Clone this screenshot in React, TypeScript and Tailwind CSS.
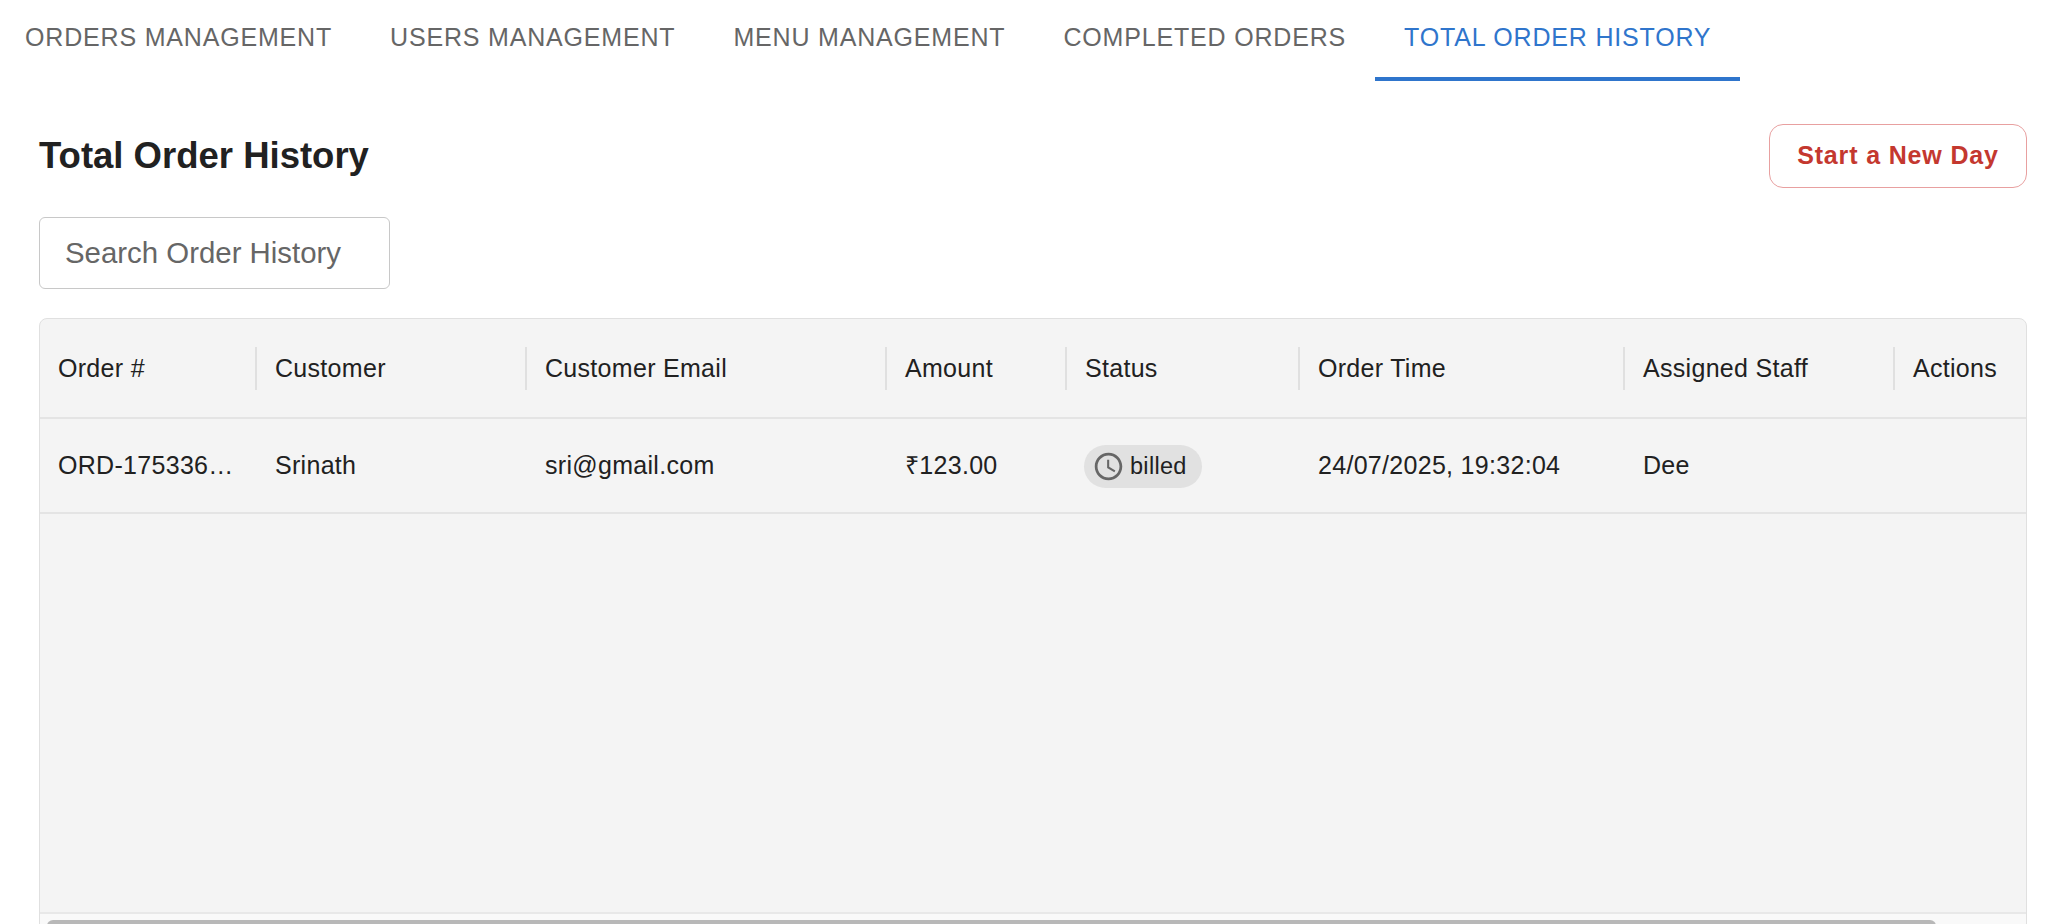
const TABS = ["ORDERS MANAGEMENT", "USERS MANAGEMENT", "MENU MANAGEMENT", "COMPLETED ORDERS", "TOTAL ORDER HISTORY"];

const COLUMNS = ["Order #", "Customer", "Customer Email", "Amount", "Status", "Order Time", "Assigned Staff", "Actions"];

function ClockIcon() {
  return (
    <svg viewBox="0 0 24 24" className="w-[33px] h-[33px] text-[#666666]" fill="currentColor">
      <path d="M11.99 2C6.47 2 2 6.48 2 12s4.47 10 9.99 10C17.52 22 22 17.52 22 12S17.52 2 11.99 2zM12 20c-4.42 0-8-3.58-8-8s3.58-8 8-8 8 3.58 8 8-3.58 8-8 8z" />
      <path d="M12.5 7H11v6l5.25 3.15.75-1.23-4.5-2.67z" />
    </svg>
  );
}

export default function App() {
  return (
    <div className="h-[924px] overflow-hidden bg-white font-['Liberation_Sans',Arial,sans-serif]">
      {/* tabs */}
      <div className="flex -ml-[4px] h-[81px]">
        {TABS.map((tab, i) => (
          <div
            key={tab}
            className={
              i === 4
                ? "flex items-center px-[29px] pb-[2px] text-[25px] tracking-[0.82px] text-[#2f75cc] border-b-4 border-[#2f75cc]"
                : "flex items-center px-[29px] pb-[2px] text-[25px] tracking-[0.82px] text-[#666666] border-b-4 border-transparent"
            }
          >
            {tab}
          </div>
        ))}
      </div>

      <div className="pl-[39px] pr-[41px] pt-[43px]">
        <div className="flex items-center justify-between mb-[29px]">
          <h1 className="text-[36.5px] font-bold text-[#212121]">Total Order History</h1>
          <button className="w-[258px] h-[64px] rounded-[14px] border border-[#e8a0a0] text-[25px] font-bold tracking-[0.85px] text-[#c4382f]">
            Start a New Day
          </button>
        </div>

        <div className="w-[351px] h-[72px] mb-[29px] px-[25px] flex items-center rounded-[6px] border border-[#c8c8c8] text-[29.4px] text-[#666666]">
          Search Order History
        </div>

        <div className="rounded-t-[8px] border border-[#e0e0e0] bg-[#f4f4f4] text-[25px] tracking-[0.3px] text-[#212121]">
          <div className="grid grid-cols-[217px_270px_360px_180px_233px_325px_270px_1fr] h-[100px] border-b-2 border-[#e4e4e4]">
            {COLUMNS.map((col, i) => (
              <div key={col} className="flex items-center justify-between pl-[18px]">
                <span className="mt-[2px]">{col}</span>
                {i < 7 && <div className="w-[2px] h-[43px] bg-[#e0e0e0]" />}
              </div>
            ))}
          </div>

          <div className="grid grid-cols-[217px_270px_360px_180px_233px_325px_270px_1fr] h-[95px] items-center border-b-2 border-[#e4e4e4]">
            <div className="pl-[18px]">ORD-175336…</div>
            <div className="pl-[18px]">Srinath</div>
            <div className="pl-[18px]">sri@gmail.com</div>
            <div className="pl-[18px]">₹123.00</div>
            <div className="pl-[17px] flex items-center">
              <div className="flex items-center h-[43px] w-[118px] mt-[2px] pl-[8px] gap-[5px] rounded-full bg-[#e1e1e1] text-[23.5px] tracking-[0.3px]">
                <ClockIcon />
                <span>billed</span>
              </div>
            </div>
            <div className="pl-[18px]">24/07/2025, 19:32:04</div>
            <div className="pl-[18px]">Dee</div>
            <div />
          </div>

          <div className="h-[398px]" />

          <div className="border-t-2 border-[#e8e8e8] bg-[#f9f9f9] pt-[6px] pl-[7px] h-[40px]">
            <div className="w-[1889px] h-[12px] rounded-full bg-[#b8b8b8]" />
          </div>
        </div>
      </div>
    </div>
  );
}
